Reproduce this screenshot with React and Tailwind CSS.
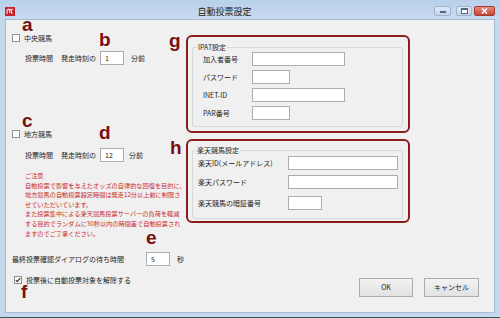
import React from "react";

// small checkbox, Windows style
function Check({ checked }) {
  return (
    <span className="w-[8px] h-[8px] border border-[#8e8f8f] bg-white flex items-center justify-center shrink-0">
      {checked && (
        <svg width="6" height="6" viewBox="0 0 6 6">
          <path d="M0.8 3.2 L2.3 4.7 L5.2 1.2" stroke="#333" strokeWidth="1.2" fill="none" />
        </svg>
      )}
    </span>
  );
}

function Field({ className, value }) {
  return (
    <div className={`h-[14px] border border-[#abadb3] bg-white text-[7px] leading-none pl-[4px] flex items-center shrink-0 ${className}`}>
      {value}
    </div>
  );
}

// red annotation letters laid over the dialog
function Mark({ className, children }) {
  return (
    <span className={`absolute text-[19px] leading-[13px] font-bold text-[#7a0f10] font-['Liberation_Sans',sans-serif] ${className}`}>
      {children}
    </span>
  );
}

function TitleBar() {
  return (
    <div className="h-[19px] flex items-start bg-linear-to-b from-[#b9d0ea] to-[#c8dbef] shrink-0">
      <svg width="10" height="9" viewBox="0 0 10 9" className="ml-[5px] mt-[7px]">
        <rect width="10" height="9" fill="#c8242c" />
        <path d="M2 7 L2 3 L4 2 L6 3 L8 2 M4 2 L5 6 M6 3 L7 7" stroke="#fff" strokeWidth="1" fill="none" />
      </svg>
      <div className="flex-1 text-center text-[9px] leading-none text-[#1a1a1a] mt-[7px]">自動投票設定</div>
      <div className="flex items-start gap-[5px] mt-[6px] mr-[5px]">
        <div className="w-[17px] h-[10px] rounded-[2px] border border-[#9fb3cb] bg-linear-to-b from-[#dde8f4] to-[#c3d5ea] flex items-center justify-center">
          <span className="w-[6px] h-[2px] bg-white border border-[#55657a] mt-[2px]"></span>
        </div>
        <div className="w-[16px] h-[10px] rounded-[2px] border border-[#9fb3cb] bg-linear-to-b from-[#dde8f4] to-[#c3d5ea] flex items-center justify-center">
          <span className="w-[7px] h-[6px] border border-[#55657a] border-t-2 bg-white"></span>
        </div>
        <div className="w-[21px] h-[10px] -ml-[3px] rounded-[2px] border border-[#a8392c] bg-linear-to-b from-[#e38a7c] to-[#c44536] flex items-center justify-center">
          <svg width="7" height="6" viewBox="0 0 7 6">
            <path d="M1 0.5 L6 5.5 M6 0.5 L1 5.5" stroke="#fff" strokeWidth="1.6" />
          </svg>
        </div>
      </div>
    </div>
  );
}

function IpatBox() {
  const rows = [
    ["加入者番号", "w-[93px]"],
    ["パスワード", "w-[38px]"],
    ["INET-ID", "w-[93px]"],
    ["PAR番号", "w-[38px]"],
  ];
  return (
    <div className="h-[98px] border-2 border-[#8b1c1e] rounded-[6px] pl-[4px] pr-[5px] pt-[6px] pb-[4px]">
      <fieldset className="h-full border border-[#d5dadf] rounded-[2px]">
        <legend className="ml-[4px] px-[1px] text-[7px] leading-[8px]">IPAT設定</legend>
        <div className="flex flex-col gap-[4px] pl-[10px] pt-[1px]">
          {rows.map(([label, w]) => (
            <div key={label} className="flex items-center">
              <span className="w-[49px] text-[7px] leading-none">{label}</span>
              <Field className={w} />
            </div>
          ))}
        </div>
      </fieldset>
    </div>
  );
}

function RakutenBox() {
  return (
    <div className="h-[84px] border-2 border-[#8b1c1e] rounded-[6px] pl-[4px] pr-[5px] pt-[5px] pb-[2px]">
      <fieldset className="h-full border border-[#d5dadf] rounded-[2px]">
        <legend className="ml-[3px] px-[1px] text-[7px] leading-[8px]">楽天競馬設定</legend>
        <div className="flex flex-col pl-[5px] pt-[2px]">
          <div className="flex items-center">
            <span className="w-[90px] text-[7px] leading-none">楽天ID(メールアドレス)</span>
            <Field className="w-[110px]" />
          </div>
          <div className="flex items-center mt-[5px]">
            <span className="w-[90px] text-[7px] leading-none">楽天パスワード</span>
            <Field className="w-[110px]" />
          </div>
          <div className="flex items-center mt-[7px]">
            <span className="w-[90px] text-[7px] leading-none">楽天競馬の暗証番号</span>
            <Field className="w-[34px]" />
          </div>
        </div>
      </fieldset>
    </div>
  );
}

export default function App() {
  return (
    <div className="relative w-[500px] h-[318px] bg-[#c5d9ee] border-b border-[#31596b] flex flex-col overflow-hidden text-[#1e1e1e] font-['Noto_Sans_CJK_JP','Liberation_Sans',sans-serif]">
      <TitleBar />

      <div className="flex-1 mx-[5px] mb-[4px] bg-[#f0f0f0] border border-[#a7bcd3] flex">
        {/* left column */}
        <div className="w-[180px] pl-[6px] pt-[14px] flex flex-col shrink-0">
          <div className="flex items-center gap-[4px] text-[7px] leading-none">
            <Check />
            <span>中央競馬</span>
          </div>
          <div className="flex items-center pl-[13px] mt-[9px] text-[7px] leading-none">
            <span>投票時間</span>
            <span className="ml-[8px]">発走時刻の</span>
            <Field className="w-[24px] ml-[4px]" value="1" />
            <span className="ml-[7px]">分前</span>
          </div>

          <div className="flex items-center gap-[4px] mt-[65px] text-[7px] leading-none">
            <Check />
            <span>地方競馬</span>
          </div>
          <div className="flex items-center pl-[13px] mt-[10px] text-[7px] leading-none">
            <span>投票時間</span>
            <span className="ml-[8px]">発走時刻の</span>
            <Field className="w-[24px] ml-[4px]" value="12" />
            <span className="ml-[5px]">分前</span>
          </div>

          <div className="pl-[13px] mt-[9px] text-[6.2px] leading-[9.6px] text-[#cc2b2b] whitespace-nowrap">
            ご注意
            <br />
            自動投票で影響を与えたオッズの自律的な回復を目的に、
            <br />
            地方競馬の自動投票設定時間は発走12分以上前に制限さ
            <br />
            せていただいています。
            <br />
            また投票集中による楽天競馬投票サーバーの負荷を軽減
            <br />
            する目的でランダムに30秒以内の時間差で自動投票され
            <br />
            ますのでご了承ください。
          </div>

          <div className="flex items-center mt-[14px] text-[7px] leading-none">
            <span className="w-[134px]">最終投票確認ダイアログの待ち時間</span>
            <Field className="w-[24px]" value="5" />
            <span className="ml-[7px]">秒</span>
          </div>
          <div className="flex items-center gap-[4px] pl-[2px] mt-[10px] text-[7px] leading-none">
            <Check checked />
            <span>投票後に自動投票対象を解除する</span>
          </div>
        </div>

        {/* right column */}
        <div className="flex-1 flex flex-col pt-[15px] pb-[15px]">
          <div className="w-[224px] flex flex-col gap-[6px]">
            <IpatBox />
            <RakutenBox />
          </div>
          <div className="mt-auto flex justify-end gap-[11px] pr-[15px]">
            <button className="w-[54px] h-[19px] border border-[#acacac] bg-linear-to-b from-[#f2f2f2] to-[#e2e2e2] text-[7px] leading-none">
              OK
            </button>
            <button className="w-[55px] h-[19px] border border-[#acacac] bg-linear-to-b from-[#f2f2f2] to-[#e2e2e2] text-[7px] leading-none">
              キャンセル
            </button>
          </div>
        </div>
      </div>

      <Mark className="left-[22px] top-[18px]">a</Mark>
      <Mark className="left-[99px] top-[33px]">b</Mark>
      <Mark className="left-[22px] top-[114px]">c</Mark>
      <Mark className="left-[99px] top-[126px]">d</Mark>
      <Mark className="left-[146px] top-[231px]">e</Mark>
      <Mark className="left-[21px] top-[285px]">f</Mark>
      <Mark className="left-[169px] top-[34px]">g</Mark>
      <Mark className="left-[170px] top-[141px]">h</Mark>
    </div>
  );
}
